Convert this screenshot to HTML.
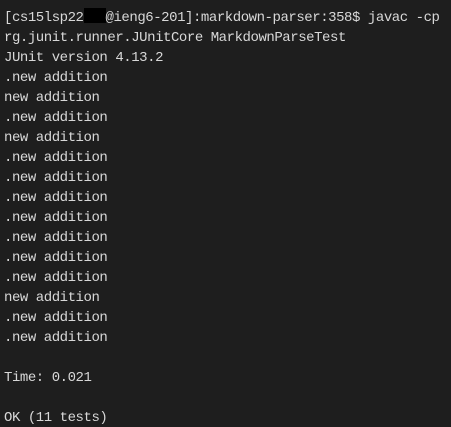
<!DOCTYPE html>
<html><head><style>
html,body{margin:0;padding:0;background:#1e1e1e;width:451px;height:427px;overflow:hidden}
pre{margin:0;padding:8px 0 0 4px;font-family:"Liberation Mono",monospace;font-size:14px;letter-spacing:-0.45px;line-height:20px;color:#d8d8d8;white-space:pre}
.r{display:inline-block;background:#000;width:22px;height:15px;vertical-align:-2px}
</style></head><body><pre>[cs15lsp22<span class="r"></span>@ieng6-201]:markdown-parser:358$ javac -cp
rg.junit.runner.JUnitCore MarkdownParseTest
JUnit version 4.13.2
.new addition
new addition
.new addition
new addition
.new addition
.new addition
.new addition
.new addition
.new addition
.new addition
.new addition
new addition
.new addition
.new addition

Time: 0.021

OK (11 tests)</pre></body></html>
